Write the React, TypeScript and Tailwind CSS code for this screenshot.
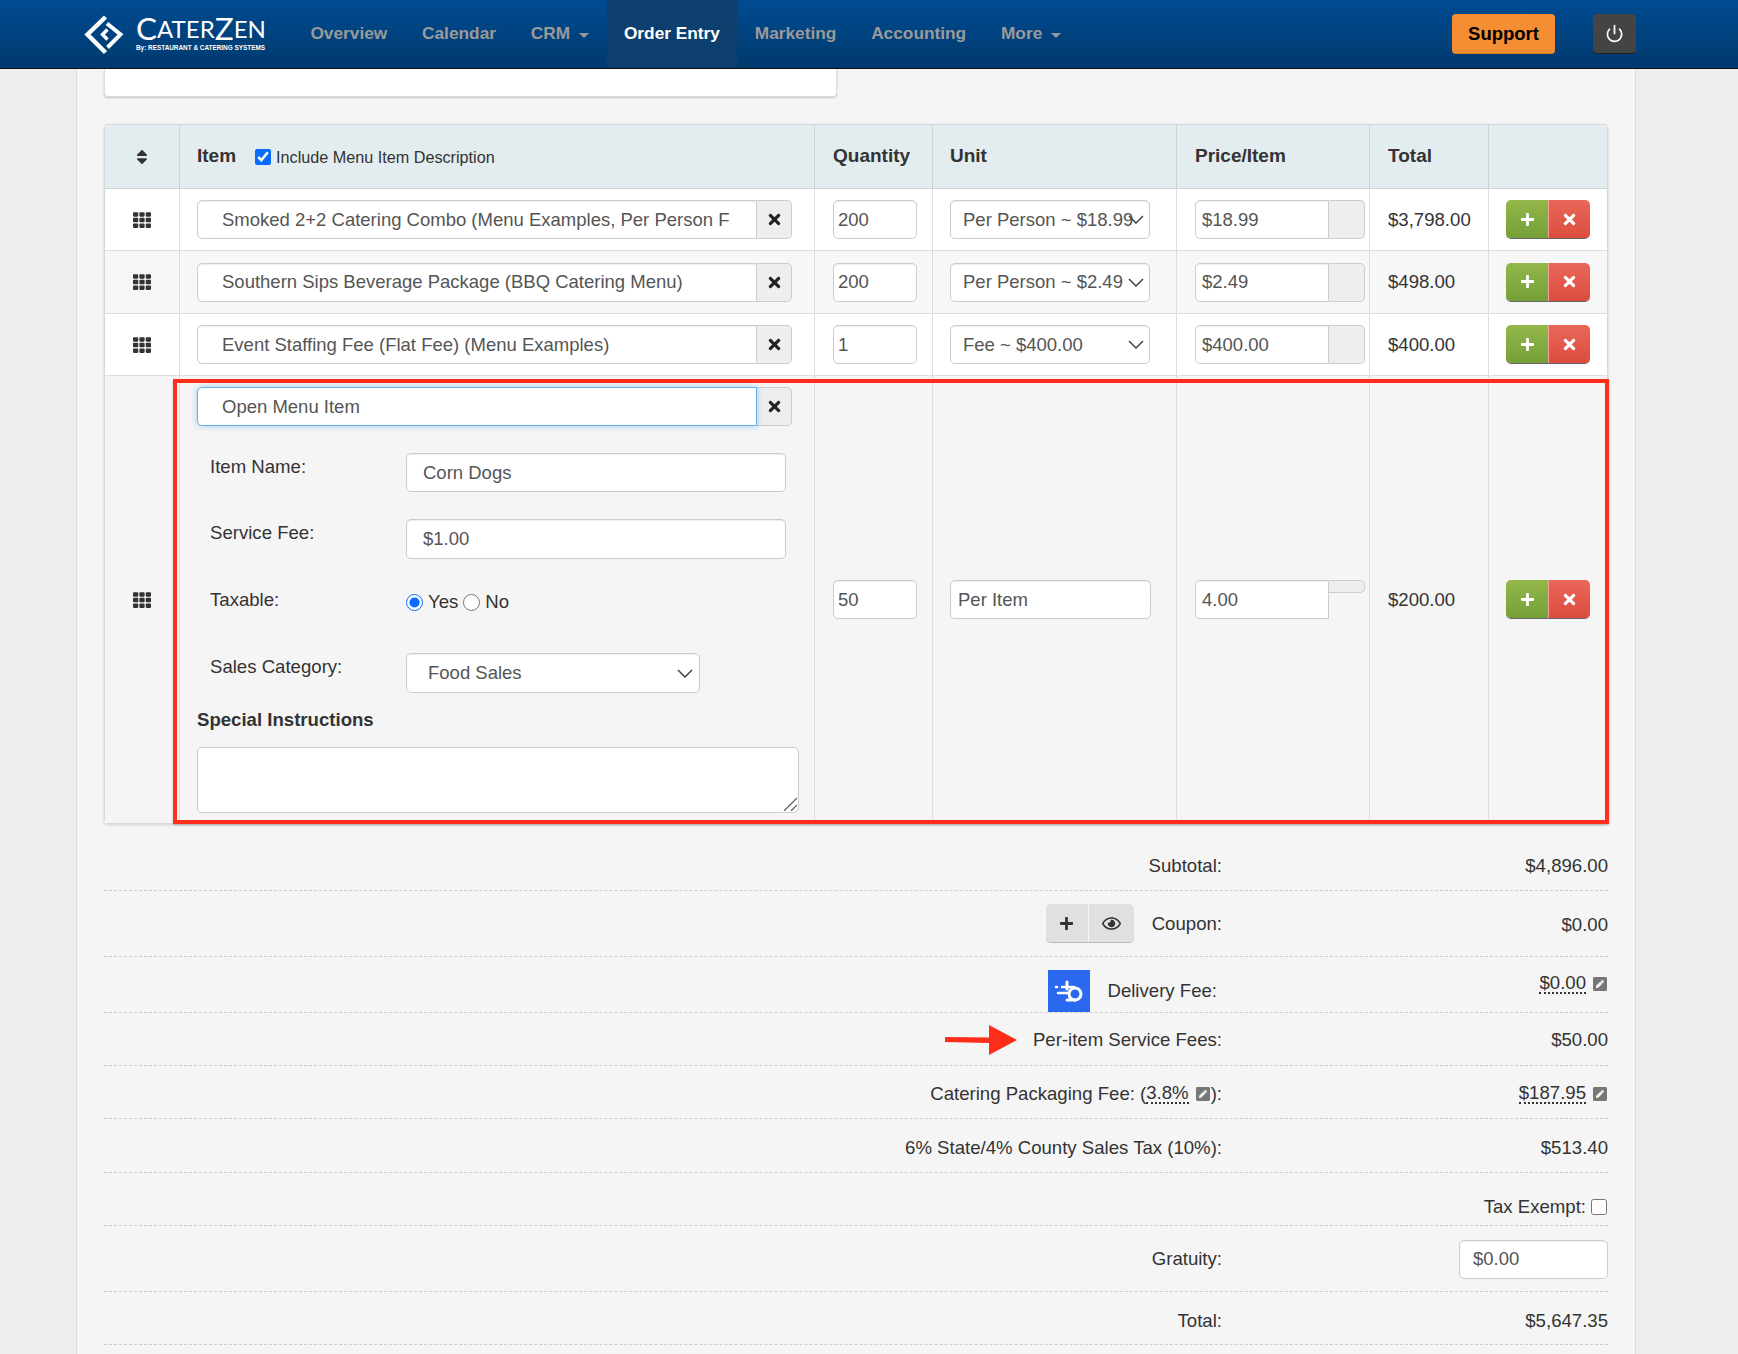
import React from "react";
import { Power } from "lucide-react";
import { FaPenSquare, FaPlus, FaRegEye, FaSort, FaTh, FaTimes } from "react-icons/fa";

const inputCls =
  "h-[39px] border border-[#ccc] bg-white text-[18.5px] text-[#555] rounded-[5px] shadow-[inset_0_1px_1px_rgba(0,0,0,0.075)] outline-none";
const cellCls = "border-r border-[#ddd] flex items-center";
const gridCols = "grid grid-cols-[75px_635px_118px_244px_193px_119px_118px]";

const navItems = [
  { label: "Overview" },
  { label: "Calendar" },
  { label: "CRM", caret: true },
  { label: "Order Entry", active: true },
  { label: "Marketing" },
  { label: "Accounting" },
  { label: "More", caret: true },
];

const lines = [
  { name: "Smoked 2+2 Catering Combo (Menu Examples, Per Person F", qty: "200", unit: "Per Person ~ $18.99", price: "$18.99", total: "$3,798.00", bg: "bg-white", h: "h-[62px]" },
  { name: "Southern Sips Beverage Package (BBQ Catering Menu)", qty: "200", unit: "Per Person ~ $2.49", price: "$2.49", total: "$498.00", bg: "bg-[#f7f7f7]", h: "h-[63px]" },
  { name: "Event Staffing Fee (Flat Fee) (Menu Examples)", qty: "1", unit: "Fee ~ $400.00", price: "$400.00", total: "$400.00", bg: "bg-white", h: "h-[62px]" },
];

function Chevron({ className }: { className: string }) {
  return (
    <svg viewBox="0 0 16 9" className={className} fill="none" stroke="#444" strokeWidth="1.5">
      <path d="M1 1l7 7 7-7" />
    </svg>
  );
}

function Logo() {
  return (
    <div className="flex items-center w-[209px] shrink-0">
      <svg viewBox="0 0 41 41" className="w-[41px] h-[41px] shrink-0" fill="none" stroke="#fff" strokeWidth="4.4">
        <path d="M21.5 3L3.5 20.5l18 18" />
        <path d="M23 9.5l13.5 11-13 13" strokeWidth="4" />
        <path d="M23.5 15.5l-5 5 5 5" strokeWidth="3.4" />
      </svg>
      <div className="ml-[11px] text-white font-['Lato',sans-serif] leading-none">
        <div className="text-[24px] h-[23px] flex items-end uppercase">
          <span className="text-[31.5px] leading-[23px]">C</span>
          <span className="leading-[23px]">ater</span>
          <span className="text-[31.5px] leading-[23px]">Z</span>
          <span className="leading-[23px]">en</span>
        </div>
        <div className="mt-[5px] text-[6.4px] font-bold whitespace-nowrap font-['Liberation_Sans',sans-serif]">
          By: RESTAURANT &amp; CATERING SYSTEMS
        </div>
      </div>
    </div>
  );
}

function Nav() {
  return (
    <div className="h-[69px] border-b border-[#111] bg-gradient-to-b from-[#004b91] to-[#003a6e] flex pl-[84px] pr-[102px]">
      <Logo />
      {navItems.map((n) => (
        <div
          key={n.label}
          className={`px-[17.4px] h-[68px] flex items-center text-[17.3px] font-bold ${n.active ? "bg-[#0d3f6e] text-white" : "text-[#9a9a9a]"}`}
        >
          {n.label}
          {n.caret && <span className="ml-[9px] mt-[2px] border-x-[5px] border-x-transparent border-t-[5px] border-t-[#9a9a9a]" />}
        </div>
      ))}
      <div className="ml-auto flex items-center gap-[38px]">
        <div className="w-[103px] h-[40px] rounded-[4px] bg-[#f58e33] border-b border-[#d97a25] flex items-center justify-center text-[18.5px] font-bold text-black">
          Support
        </div>
        <div className="w-[43px] h-[40px] rounded-[4px] bg-[#444] border-b border-[#222] flex items-center justify-center">
          <Power size={19} color="#fff" strokeWidth={2.2} />
        </div>
      </div>
    </div>
  );
}

function ActionButtons() {
  return (
    <div className="flex h-[39px] w-[84px] rounded-[5px] overflow-hidden border-b border-[#666]">
      <div className="w-[43px] bg-gradient-to-b from-[#93b74a] to-[#75a037] flex items-center justify-center border-r border-[#f3a39b]">
        <FaPlus size={15} color="#fff" />
      </div>
      <div className="flex-1 bg-gradient-to-b from-[#e9675a] to-[#dc4c3e] flex items-center justify-center">
        <FaTimes size={17} color="#fff" />
      </div>
    </div>
  );
}

function ItemInput({ value, focus }: { value: string; focus?: boolean }) {
  return (
    <div className="flex w-[595px] h-[39px]">
      <input
        readOnly
        value={value}
        className={`${inputCls} w-[560px] rounded-r-none pl-[24px] pr-[22px] ${focus ? "relative border-[#66afe9]! shadow-[0_0_6px_rgba(102,175,233,0.6)]!" : ""}`}
      />
      <div className="flex-1 bg-[#eee] border border-l-0 border-[#ccc] rounded-r-[5px] flex items-center justify-center">
        <FaTimes size={17} color="#222" />
      </div>
    </div>
  );
}

function LineRow({ line }: { line: (typeof lines)[number] }) {
  return (
    <div className={`${gridCols} border-b border-[#ddd] ${line.h} ${line.bg}`}>
      <div className={`${cellCls} justify-center text-[#333]`}>
        <FaTh size={18} />
      </div>
      <div className={`${cellCls} pl-[17px]`}>
        <ItemInput value={line.name} />
      </div>
      <div className={`${cellCls} pl-[18px]`}>
        <input readOnly value={line.qty} className={`${inputCls} w-[84px] pl-[4px]`} />
      </div>
      <div className={`${cellCls} pl-[17px]`}>
        <div className="relative w-[200px] h-[39px]">
          <select defaultValue={line.unit} className={`${inputCls} w-full pl-[12px] appearance-none`}>
            <option>{line.unit}</option>
          </select>
          <Chevron className="absolute right-[6px] top-[15px] w-[16px] h-[9px]" />
        </div>
      </div>
      <div className={`${cellCls} pl-[18px]`}>
        <div className="flex w-[170px] h-[39px]">
          <input readOnly value={line.price} className={`${inputCls} w-[134px] rounded-r-none pl-[6px]`} />
          <div className="flex-1 bg-[#eee] border border-l-0 border-[#ccc] rounded-r-[5px]" />
        </div>
      </div>
      <div className={`${cellCls} pl-[18px] text-[18.6px] text-[#333]`}>{line.total}</div>
      <div className="flex items-center pl-[17px]">
        <ActionButtons />
      </div>
    </div>
  );
}

function FieldRow({ label, className, children }: { label: string; className: string; children: React.ReactNode }) {
  return (
    <div className={`flex pl-[13px] ${className}`}>
      <div className="w-[196px] pt-[2px] text-[18.6px] leading-[24px] text-[#333]">{label}</div>
      {children}
    </div>
  );
}

function OpenItemRow() {
  return (
    <div className={`relative ${gridCols} bg-[#f5f5f5]`}>
      <div className={`${cellCls} justify-center text-[#333]`}>
        <FaTh size={18} />
      </div>
      <div className="border-r border-[#ddd] pl-[17px] pt-[11px] pb-[10px]">
        <ItemInput value="Open Menu Item" focus />
        <FieldRow label="Item Name:" className="mt-[27px]">
          <input readOnly value="Corn Dogs" className={`${inputCls} w-[380px] pl-[16px]`} />
        </FieldRow>
        <FieldRow label="Service Fee:" className="mt-[27px]">
          <input readOnly value="$1.00" className={`${inputCls} w-[380px] h-[40px] pl-[16px]`} />
        </FieldRow>
        <div className="mt-[29px] h-[24px] flex pl-[13px] text-[18.6px] leading-[24px] text-[#333]">
          <div className="w-[196px]">Taxable:</div>
          <label className="flex items-center h-[24px] mt-[2px]">
            <input type="radio" name="taxable" defaultChecked className="w-[17px] h-[17px] m-0 accent-[#0a6cff]" />
            <span className="ml-[5px]">Yes</span>
          </label>
          <label className="flex items-center h-[24px] mt-[2px] ml-[5px]">
            <input type="radio" name="taxable" className="w-[17px] h-[17px] m-0" />
            <span className="ml-[5px]">No</span>
          </label>
        </div>
        <FieldRow label="Sales Category:" className="mt-[41px]">
          <div className="relative w-[294px] h-[40px]">
            <select defaultValue="Food Sales" className={`${inputCls} h-[40px] w-full pl-[21px] appearance-none`}>
              <option>Food Sales</option>
            </select>
            <Chevron className="absolute right-[7px] top-[16px] w-[16px] h-[9px]" />
          </div>
        </FieldRow>
        <div className="mt-[15px] text-[18.6px] leading-[24px] font-bold text-[#333]">Special Instructions</div>
        <div className="relative mt-[15px] w-[602px] h-[66px]">
          <textarea readOnly className="block w-full h-full resize-none border border-[#ccc] bg-white rounded-[5px] outline-none" />
          <svg viewBox="0 0 14 14" className="absolute right-[2px] bottom-[2px] w-[14px] h-[14px]" fill="none" stroke="#555" strokeWidth="1.2">
            <path d="M1 14L14 1M8 14l6-6" />
          </svg>
        </div>
      </div>
      <div className={`${cellCls} pl-[18px]`}>
        <input readOnly value="50" className={`${inputCls} w-[84px] pl-[4px]`} />
      </div>
      <div className={`${cellCls} pl-[17px]`}>
        <input readOnly value="Per Item" className={`${inputCls} w-[201px] pl-[7px]`} />
      </div>
      <div className={`${cellCls} pl-[18px]`}>
        <div className="flex w-[170px] h-[39px] items-start">
          <input readOnly value="4.00" className={`${inputCls} w-[134px] rounded-r-none pl-[6px]`} />
          <div className="flex-1 h-[13px] bg-[#eee] border border-l-0 border-[#ccc] rounded-r-[5px]" />
        </div>
      </div>
      <div className={`${cellCls} pl-[18px] text-[18.6px] text-[#333]`}>$200.00</div>
      <div className="flex items-center pl-[17px]">
        <ActionButtons />
      </div>
      {/* red annotation box */}
      <div className="absolute left-[68px] top-[3px] -right-[2px] -bottom-[1px] border-[4px] border-[#ff2d19] shadow-[0_1px_2px_rgba(0,0,0,0.25)] pointer-events-none" />
    </div>
  );
}

function ItemsTable() {
  return (
    <div className="mt-[27px] border border-[#d5d9da] rounded-[4px] shadow-[0_1px_3px_rgba(0,0,0,0.15)]">
      <div className={`${gridCols} h-[64px] bg-[#e3edef] border-b border-[#ccd4d6] text-[19px] font-bold text-[#333] rounded-t-[4px]`}>
        <div className="border-r border-[#ccd4d6] flex items-center justify-center">
          <FaSort size={18} />
        </div>
        <div className="border-r border-[#ccd4d6] flex items-center pl-[17px]">
          Item
          <label className="ml-[19px] mt-[2px] flex items-center font-normal text-[16.2px]">
            <input type="checkbox" defaultChecked className="w-[16px] h-[16px] m-0 accent-[#0a6cff]" />
            <span className="ml-[5px]">Include Menu Item Description</span>
          </label>
        </div>
        <div className="border-r border-[#ccd4d6] flex items-center pl-[18px]">Quantity</div>
        <div className="border-r border-[#ccd4d6] flex items-center pl-[17px]">Unit</div>
        <div className="border-r border-[#ccd4d6] flex items-center pl-[18px]">Price/Item</div>
        <div className="border-r border-[#ccd4d6] flex items-center pl-[18px]">Total</div>
        <div />
      </div>
      {lines.map((l) => (
        <LineRow key={l.name} line={l} />
      ))}
      <OpenItemRow />
    </div>
  );
}

function SumRow({ className, label, value }: { className: string; label: React.ReactNode; value: React.ReactNode }) {
  return (
    <div className={`grid grid-cols-[1118px_386px] border-b border-dashed border-[#ccc] text-[18.6px] text-[#333] ${className}`}>
      <div className="flex items-center justify-end">{label}</div>
      <div className="flex items-center justify-end">{value}</div>
    </div>
  );
}

function Editable({ children }: { children: React.ReactNode }) {
  return <span className="border-b-2 border-dotted border-[#333] leading-[18px]">{children}</span>;
}

function Pencil({ className }: { className: string }) {
  return <FaPenSquare size={16} color="#777" className={className} />;
}

function DeliveryBadge() {
  return (
    <div className="w-[42px] h-[42px] bg-[#2a69ef] flex items-center justify-center">
      <svg viewBox="0 0 42 42" className="w-[42px] h-[42px]" fill="none" stroke="#fff" strokeLinecap="round">
        <circle cx="27" cy="24" r="6" strokeWidth="3" />
        <path d="M19 12v7" strokeWidth="3" />
        <path d="M14 17h12M8 17h1" strokeWidth="2.5" />
        <path d="M10 23h11" strokeWidth="2.5" />
        <path d="M19 30h8" strokeWidth="3" />
      </svg>
    </div>
  );
}

function Summary() {
  return (
    <div>
      <SumRow className="h-[67px] pt-[18px]" label="Subtotal:" value="$4,896.00" />
      <SumRow
        className="h-[66px]"
        label={
          <>
            <div className="flex h-[39px] w-[88px] rounded-[5px] bg-[#e0e0e0] border-b border-[#bbb] mr-[18px] text-[#333]">
              <div className="w-[43px] border-r border-[#f5f5f5] flex items-center justify-center">
                <FaPlus size={15} />
              </div>
              <div className="flex-1 flex items-center justify-center">
                <FaRegEye size={19} />
              </div>
            </div>
            Coupon:
          </>
        }
        value={<span className="pt-[3px]">$0.00</span>}
      />
      <SumRow
        className="h-[56px]"
        label={
          <div className="flex items-end self-end h-[42px]">
            <DeliveryBadge />
            <span className="ml-[17px] mr-[5px] self-center">Delivery Fee:</span>
          </div>
        }
        value={
          <div className="flex items-center pb-[2px]">
            <Editable>$0.00</Editable>
            <Pencil className="ml-[6px]" />
          </div>
        }
      />
      <SumRow
        className="h-[53px] pt-[2px]"
        label={
          <>
            <svg viewBox="0 0 72 30" className="w-[72px] h-[30px] mr-[16px]" fill="#ff2d19">
              <path d="M0 12l44 0.5V0l28 15-28 15V18L0 17z" />
            </svg>
            Per-item Service Fees:
          </>
        }
        value="$50.00"
      />
      <SumRow
        className="h-[53px] pt-[4px]"
        label={
          <>
            Catering Packaging Fee: (<Editable>3.8%</Editable>
            <Pencil className="ml-[6px]" />
            ):
          </>
        }
        value={
          <div className="flex items-center">
            <Editable>$187.95</Editable>
            <Pencil className="ml-[6px]" />
          </div>
        }
      />
      <SumRow className="h-[54px] pt-[4px]" label="6% State/4% County Sales Tax (10%):" value="$513.40" />
      <SumRow
        className="h-[53px] pt-[16px]"
        label=""
        value={
          <label className="flex items-center">
            Tax Exempt:
            <input type="checkbox" className="ml-[5px] mr-[1px] w-[16px] h-[16px] m-0" />
          </label>
        }
      />
      <SumRow
        className="h-[66px] pt-[1px]"
        label="Gratuity:"
        value={<input readOnly value="$0.00" className={`${inputCls} w-[149px] pl-[13px]`} />}
      />
      <SumRow className="h-[53px] pt-[5px]" label="Total:" value="$5,647.35" />
    </div>
  );
}

export default function App() {
  return (
    <div className="h-[1354px] overflow-hidden bg-[#eeeeee] font-['Liberation_Sans',Arial,sans-serif]">
      <Nav />
      <div className="ml-[76px] w-[1560px] h-[1285px] bg-[#f5f5f5] border-x border-[#ddd] pl-[27px]">
        <div className="w-[1504px]">
          <div className="w-[733px] h-[28px] bg-white border border-t-0 border-[#ddd] rounded-b-[4px] shadow-[0_1px_2px_rgba(0,0,0,0.2)]" />
          <ItemsTable />
          <Summary />
        </div>
      </div>
    </div>
  );
}
